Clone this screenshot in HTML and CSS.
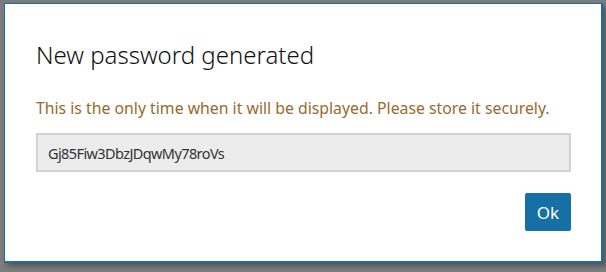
FILE: index.html
```html
<!DOCTYPE html>
<html lang="en">
<head>
  <meta charset="UTF-8">
  <title>New password</title>
  <link rel="stylesheet" href="styles.css">
</head>
<body>
  <div class="dialog">
    <h1 class="dialog-title">New password generated</h1>
    <p class="warning-text">This is the only time when it will be displayed. Please store it securely.</p>
    <input type="text" class="password-field" value="Gj85Fiw3DbzJDqwMy78roVs" readonly>
    <div class="dialog-footer">
      <button class="ok-btn">Ok</button>
    </div>
  </div>
</body>
</html>
```

FILE: styles.css
```css
body {
  margin: 0;
  padding: 3px 0 0 4px;
  background: #7d7d7d;
  font-family: "Noto Sans", "Open Sans", sans-serif;
  height: 272px;
  box-sizing: border-box;
  overflow: hidden;
}
.dialog {
  width: 599px;
  height: 260px;
  box-sizing: border-box;
  background: white;
  border: 2px solid #1a6fa6;
  border-top-width: 1px;
  border-left-width: 1px;
  box-shadow: 3px 3px 5px rgba(0,0,0,0.35);
  padding: 35px 30px 0 31px;
}
.dialog-title {
  margin: 0;
  font-size: 24px;
  font-weight: 300;
  color: #111;
  line-height: 32px;
}
.warning-text {
  margin: 27px 0 0 0;
  font-size: 15.8px;
  line-height: 20px;
  color: #9a6a2c;
}
.password-field {
  display: block;
  margin-top: 15px;
  width: 100%;
  height: 39px;
  box-sizing: border-box;
  border: 2px solid #d2d2d2;
  background: #ececec;
  padding: 0 10px;
  font-family: inherit;
  font-size: 14.5px;
  letter-spacing: -0.6px;
  color: #333;
  outline: none;
}
.dialog-footer {
  display: flex;
  justify-content: flex-end;
  margin-top: 21px;
}
.ok-btn {
  width: 46px;
  height: 38px;
  border: none;
  border-radius: 2px;
  background: #1670a5;
  color: white;
  font-family: inherit;
  font-size: 17px;
  cursor: pointer;
}
```
